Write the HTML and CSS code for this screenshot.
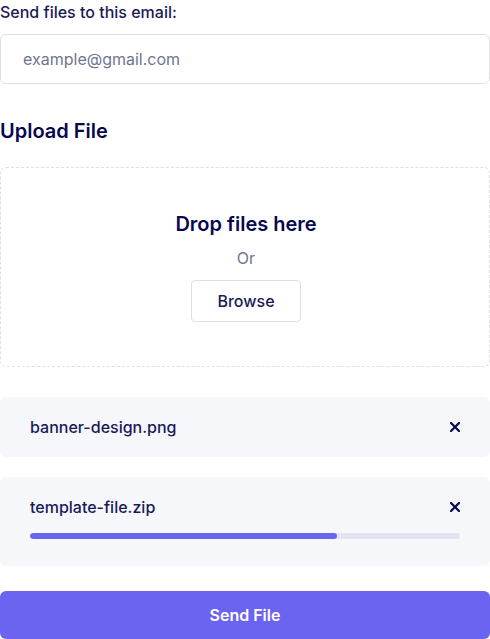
FILE: index.html
```html
<!DOCTYPE html>
<html>
<head>
<meta charset="utf-8">
<link rel="stylesheet" href="styles.css">
</head>
<body>
<form class="form">
  <label class="label" for="email">Send files to this email:</label>
  <input class="input" id="email" type="email" placeholder="example@gmail.com">

  <div class="label-2">Upload File</div>

  <div class="drop">
    <span class="drop-title">Drop files here</span>
    <span class="drop-or">Or</span>
    <span class="browse">Browse</span>
  </div>

  <div class="file">
    <div class="file-row">
      <span class="file-name">banner-design.png</span>
      <button type="button" class="close" aria-label="Remove">
        <svg width="10" height="10" viewBox="0 0 10 10"><path d="M1 1L9 9M9 1L1 9" stroke="#07074D" stroke-width="2.2" stroke-linecap="square"/></svg>
      </button>
    </div>
  </div>

  <div class="file file-progress">
    <div class="file-row">
      <span class="file-name">template-file.zip</span>
      <button type="button" class="close" aria-label="Remove">
        <svg width="10" height="10" viewBox="0 0 10 10"><path d="M1 1L9 9M9 1L1 9" stroke="#07074D" stroke-width="2.2" stroke-linecap="square"/></svg>
      </button>
    </div>
    <div class="progress"><div class="progress-fill" style="width:71.5%"></div></div>
  </div>

  <button type="button" class="send">Send File</button>
</form>
</body>
</html>
```

FILE: styles.css
```css
* { box-sizing: border-box; }
html, body { margin: 0; padding: 0; background: #fff; }
body { font-family: Inter, "Noto Sans", sans-serif; color: #07074D; }
.form { width: 490px; display: flex; flex-direction: column; }
.label { display: block; font-size: 16px; line-height: 24px; font-weight: 500; margin-bottom: 10px; color: #1a1a55; }
.input {
  width: 100%; height: 50px; padding: 12px 22px; border: 1px solid #e0e0e0; border-radius: 6px;
  font-family: inherit; font-size: 16px; font-weight: 400; color: #6B7280; outline: none; background: #fff;
}
.input::placeholder { color: #6E7491; }
.label-2 { font-size: 20px; line-height: 30px; font-weight: 600; margin-top: 32px; margin-bottom: 21px; }
.drop {
  height: 200px; border: 1px dashed #e0e0e0; border-radius: 6px; padding-bottom: 4px; padding-left: 2px;
  display: flex; flex-direction: column; align-items: center; justify-content: center;
}
.drop-title { font-size: 20px; line-height: 30px; font-weight: 600; margin-bottom: 7px; }
.drop-or { font-size: 16px; line-height: 24px; font-weight: 400; color: #6E7491; margin-bottom: 10px; }
.browse {
  width: 110px; height: 42px; border: 1px solid #e0e0e0; border-radius: 4px;
  display: flex; align-items: center; justify-content: center; font-size: 16px; font-weight: 500; color: #1a1a55;
}
.file { background: #F5F7FB; border-radius: 6px; padding: 18px 30px; margin-top: 30px; }
.file + .file { margin-top: 20px; }
.file-row { display: flex; align-items: center; justify-content: space-between; height: 24px; }
.file-name { font-size: 16px; line-height: 24px; font-weight: 500; color: #1a1a55; }
.close { border: 0; background: none; padding: 0; width: 10px; height: 10px; display: flex; cursor: pointer; }
.close svg { display: block; }
.file-progress { padding-bottom: 27px; }
.progress { margin-top: 14px; height: 6px; border-radius: 8px; background: #E2E5EF; overflow: hidden; }
.progress-fill { height: 100%; background: #6A64F1; border-radius: 8px; }
.send {
  margin-top: 25px; width: 100%; height: 48px; border: 0; border-radius: 6px; background: #6A64F1;
  color: #fff; font-family: inherit; font-size: 16px; font-weight: 600;
}
```
